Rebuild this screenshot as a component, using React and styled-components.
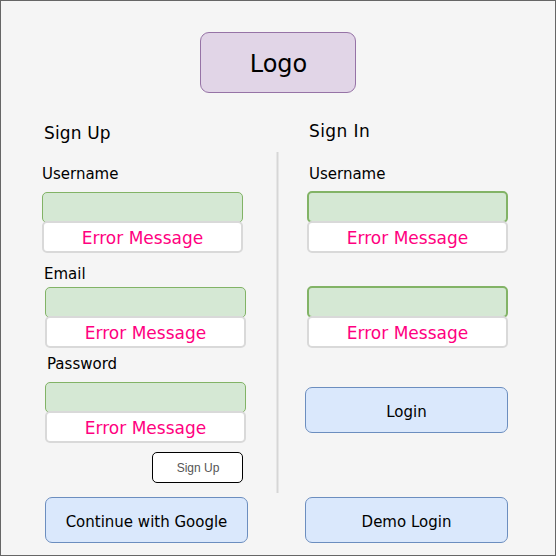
import React from "react";
import styled, { createGlobalStyle } from "styled-components";

const GlobalStyle = createGlobalStyle`
  *, *::before, *::after { box-sizing: border-box; }
  body { margin: 0; font-family: "DejaVu Sans", Verdana, sans-serif; color: #000; }
`;

const Page = styled.main`
  width: 556px;
  height: 556px;
  padding-top: 31px;
  overflow: hidden;
  border: 1px solid #666;
  background: #f5f5f5;
`;

const Logo = styled.div`
  display: flex;
  align-items: center;
  justify-content: center;
  width: 156px;
  height: 61px;
  margin-left: 199px;
  padding: 2px 0 0 1px;
  border: 1px solid #9673a6;
  border-radius: 9px;
  background: #e1d5e7;
  font-size: 24px;
`;

const Columns = styled.div`
  display: grid;
  grid-template-columns: 235px 3px 1fr;
  height: 462px;
  padding-left: 40px;
`;

const Divider = styled.div`
  width: 3px;
  height: 341px;
  margin-top: 59px;
  border: solid #e6e6e6;
  border-width: 0 1px;
  background: #d6d6d6;
`;

const Form = styled.form`
  display: flex;
  flex-direction: column;
  align-items: flex-start;
  padding-left: ${(p) => p.$inset}px;
`;

const Title = styled.h2`
  margin: ${(p) => p.$top}px 0 0 ${(p) => p.$indent}px;
  font-size: 17px;
  font-weight: 400;
  line-height: 20px;
  letter-spacing: ${(p) => p.$tracking}px;
`;

const Label = styled.label`
  margin: ${(p) => p.$top}px 0 0 ${(p) => p.$indent}px;
  font-size: 15px;
  line-height: 18px;
`;

const FieldBox = styled.div`
  display: flex;
  flex-direction: column;
  width: 201px;
  margin: ${(p) => p.$top}px 0 0 ${(p) => p.$indent}px;
`;

const Input = styled.div`
  height: ${(p) => (p.$strong ? 32 : 31)}px;
  margin-top: ${(p) => (p.$strong ? -1 : 0)}px;
  border: ${(p) => (p.$strong ? 2 : 1)}px solid #82b366;
  border-radius: 5px;
  background: #d5e8d4;
`;

const ErrorMessage = styled.div`
  display: flex;
  align-items: center;
  justify-content: center;
  height: 32px;
  margin-top: -2px;
  padding-top: 2px;
  border: 2px solid #d9d9d9;
  border-radius: 5px;
  background: #fff;
  color: #ff0080;
  font-size: 17px;
`;

const ActionButton = styled.button`
  width: 203px;
  height: 46px;
  margin: ${(p) => p.$top}px 0 0 ${(p) => p.$indent || 0}px;
  padding: 4px 0 0;
  border: 1px solid #6c8ebf;
  border-radius: 7px;
  background: #dae8fc;
  color: #000;
  font: 15px "DejaVu Sans", Verdana, sans-serif;
`;

const SubmitButton = styled.button`
  width: 91px;
  height: 31px;
  margin: 9px 0 0 110px;
  padding: 0 0 0 1px;
  border: 1px solid #000;
  border-radius: 5px;
  background: #fff;
  color: #555;
  font: 12px "Liberation Sans", Arial, sans-serif;
`;

function Field({ top, indent = 0, strong }) {
  return (
    <FieldBox $top={top} $indent={indent}>
      <Input $strong={strong} />
      <ErrorMessage>Error Message</ErrorMessage>
    </FieldBox>
  );
}

export default function App() {
  return (
    <>
      <GlobalStyle />
      <Page>
        <Logo>Logo</Logo>
        <Columns>
          <Form $inset={1}>
            <Title $top={30} $indent={2} $tracking={0.15}>Sign Up</Title>
            <Label $top={22} $indent={0}>Username</Label>
            <Field top={9} />
            <Label $top={12} $indent={2}>Email</Label>
            <Field top={4} indent={3} />
            <Label $top={7} $indent={5}>Password</Label>
            <Field top={9} indent={3} />
            <SubmitButton type="button">Sign Up</SubmitButton>
            <ActionButton type="button" $top={14} $indent={3}>Continue with Google</ActionButton>
          </Form>
          <Divider />
          <Form $inset={26}>
            <Title $top={28} $indent={4} $tracking={0.4}>Sign In</Title>
            <Label $top={24} $indent={4}>Username</Label>
            <Field top={9} indent={2} strong />
            <Field top={34} indent={2} strong />
            <ActionButton type="button" $top={39}>Login</ActionButton>
            <ActionButton type="button" $top={64}>Demo Login</ActionButton>
          </Form>
        </Columns>
      </Page>
    </>
  );
}
